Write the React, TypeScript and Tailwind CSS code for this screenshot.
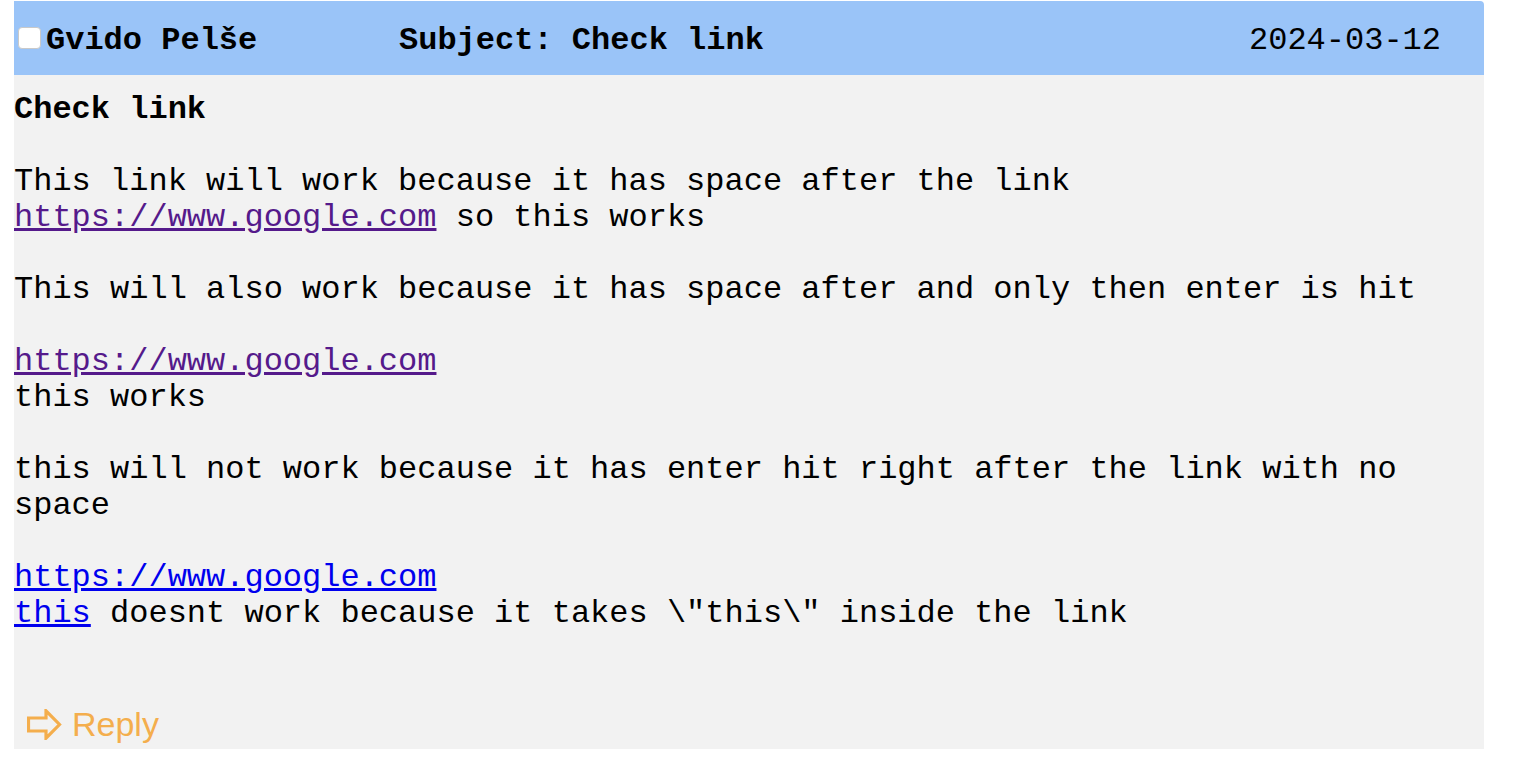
import React from "react";

const mono = { fontFamily: '"Liberation Mono", "Courier New", monospace' };

export default function App() {
  return (
    <div className="w-[1514px] h-[762px] bg-white">
      <div className="ml-[14px] w-[1470px] pt-[1px]" style={mono}>
        <div className="h-[74px] bg-[#9ac4f8] rounded-tr-[4px] flex items-center pl-[4px] pr-[43px] text-[32px] text-black">
          <div className="w-[23px] h-[22px] bg-white border border-[#c9c9c9] rounded-[4px] mr-[5px] shrink-0" />
          <div className="flex-1 flex pt-[5px]">
            <div className="w-[353px] font-bold leading-[36px]">Gvido Pelše</div>
            <div className="flex-1 font-bold leading-[36px]">Subject: Check link</div>
            <div className="leading-[36px]">2024-03-12</div>
          </div>
        </div>
        <div className="bg-[#f2f2f2] pt-[17px] pb-[7px] text-[32px] leading-[36px] text-black">
          <div className="font-bold">Check link</div>
          <div className="h-[36px]" />
          <div>This link will work because it has space after the link</div>
          <div>
            <a className="text-[#551a8b] underline" href="#">https://www.google.com</a> so this works
          </div>
          <div className="h-[36px]" />
          <div>This will also work because it has space after and only then enter is hit</div>
          <div className="h-[36px]" />
          <div>
            <a className="text-[#551a8b] underline" href="#">https://www.google.com</a>
          </div>
          <div>this works</div>
          <div className="h-[36px]" />
          <div>this will not work because it has enter hit right after the link with no space</div>
          <div className="h-[36px]" />
          <div>
            <a className="text-[#0000ee] underline" href="#">https://www.google.com</a>
          </div>
          <div>
            <a className="text-[#0000ee] underline" href="#">this</a> doesnt work because it takes \"this\" inside the link
          </div>
          <div className="mt-[74px] h-[36px] flex items-center pl-[13px] text-[#f4ae4d]" style={{ fontFamily: '"Liberation Sans", Arial, sans-serif' }}>
            <svg width="35" height="31" viewBox="0 0 35 31" className="mr-[10px]">
              <path d="M1.5 9 H19 V1.8 L32.5 15.5 L19 29.2 V22 H1.5 Z" fill="none" stroke="#f4ae4d" strokeWidth="3.2" strokeLinejoin="miter" />
            </svg>
            <span className="text-[34px]">Reply</span>
          </div>
        </div>
      </div>
    </div>
  );
}
